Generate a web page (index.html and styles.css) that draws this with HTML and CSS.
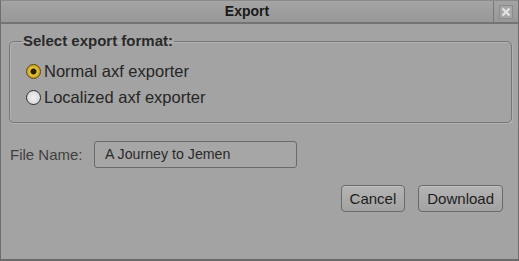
FILE: index.html
```html
<!DOCTYPE html>
<html>
<head>
  <title>Export</title>
  <link rel="stylesheet" href="styles.css">
</head>
<body>
  <div class="dialog">
    <div class="titlebar">
      <div class="title">Export</div>
      <div class="close">
        <svg width="14" height="14" viewBox="0 0 14 14">
          <rect x="0.5" y="0.5" width="13" height="13" fill="#a6a6a6" stroke="#8c8c8c"/>
          <path d="M3.5 3.5 L10.5 10.5 M10.5 3.5 L3.5 10.5" stroke="#e2e2e2" stroke-width="2.4"/>
        </svg>
      </div>
    </div>
    <div class="content">
      <fieldset class="formats">
        <legend>Select export format:</legend>
        <label class="option"><span class="radio checked"></span>Normal axf exporter</label>
        <label class="option"><span class="radio"></span>Localized axf exporter</label>
      </fieldset>
      <div class="filerow">
        <label class="filelabel">File Name:</label>
        <div class="input">A Journey to Jemen</div>
      </div>
      <div class="buttons">
        <button class="btn">Cancel</button>
        <button class="btn">Download</button>
      </div>
    </div>
  </div>
</body>
</html>
```

FILE: styles.css
```css
html, body {
  margin: 0;
  padding: 0;
}
body {
  font-family: "Liberation Sans", Arial, sans-serif;
  background-color: #a2a2a2;
  width: 519px;
  height: 261px;
  overflow: hidden;
}
.dialog {
  box-sizing: border-box;
  width: 519px;
  height: 261px;
  border: 1px solid #6e6e6e;
  border-top-color: #8a8a8a;
  border-bottom: 2px solid #6a6a6a;
  background-color: #a3a3a3;
}
.titlebar {
  display: flex;
  height: 21px;
  background: linear-gradient(#a4a4a4, #989898);
  border-bottom: 2px solid #747474;
}
.title {
  flex: 1;
  text-align: center;
  font-weight: bold;
  font-size: 14px;
  line-height: 21px;
  color: #1a1a1a;
}
.close {
  width: 24px;
  border-left: 1px solid #7a7a7a;
  display: flex;
  align-items: center;
  justify-content: center;
}
.content {
  padding: 9px 6px 0 8px;
}
.formats {
  margin: 0;
  padding: 9px 10px 12px 16px;
  border: 1px solid #777;
  border-radius: 5px;
  box-shadow: 1px 1px 0 #b2b2b2, inset 1px 1px 0 #b2b2b2;
}
.formats legend {
  font-weight: bold;
  font-size: 15px;
  line-height: 16px;
  color: #2a2a2a;
  padding: 0 1px;
  margin-left: -4px;
}
.option {
  display: flex;
  align-items: center;
  font-size: 16.5px;
  color: #262626;
  height: 26px;
}
.radio {
  box-sizing: border-box;
  width: 15px;
  height: 15px;
  border-radius: 50%;
  border: 1px solid #2e2e2e;
  background: radial-gradient(#f2f2f2, #cfcfcf);
  margin-right: 3px;
  margin-left: 0;
}
.radio.checked {
  background: radial-gradient(circle, #2a2000 0, #2a2000 2.5px, #e4c448 3.5px, #c89a10 7px);
  border-color: #5e4a10;
}
.filerow {
  display: flex;
  align-items: center;
  margin-top: 18px;
  margin-left: 1px;
}
.filelabel {
  font-size: 15px;
  color: #404040;
  width: 84px;
}
.input {
  box-sizing: border-box;
  width: 203px;
  height: 27px;
  border: 1px solid #6a6a6a;
  border-radius: 3px;
  font-size: 14.2px;
  color: #2a2a2a;
  line-height: 25px;
  padding-left: 10px;
  background-color: #a6a6a6;
}
.buttons {
  display: flex;
  justify-content: flex-end;
  gap: 13px;
  margin-top: 17px;
  margin-right: 9px;
}
.btn {
  font-family: "Liberation Sans", Arial, sans-serif;
  font-size: 15px;
  color: #1e1e1e;
  height: 27px;
  padding: 0 8px;
  border: 1px solid #6a6a6a;
  border-radius: 4px;
  background: linear-gradient(#b4b4b4, #a2a2a2);
  box-shadow: inset 0 1px 0 #c2c2c2;
}
```
